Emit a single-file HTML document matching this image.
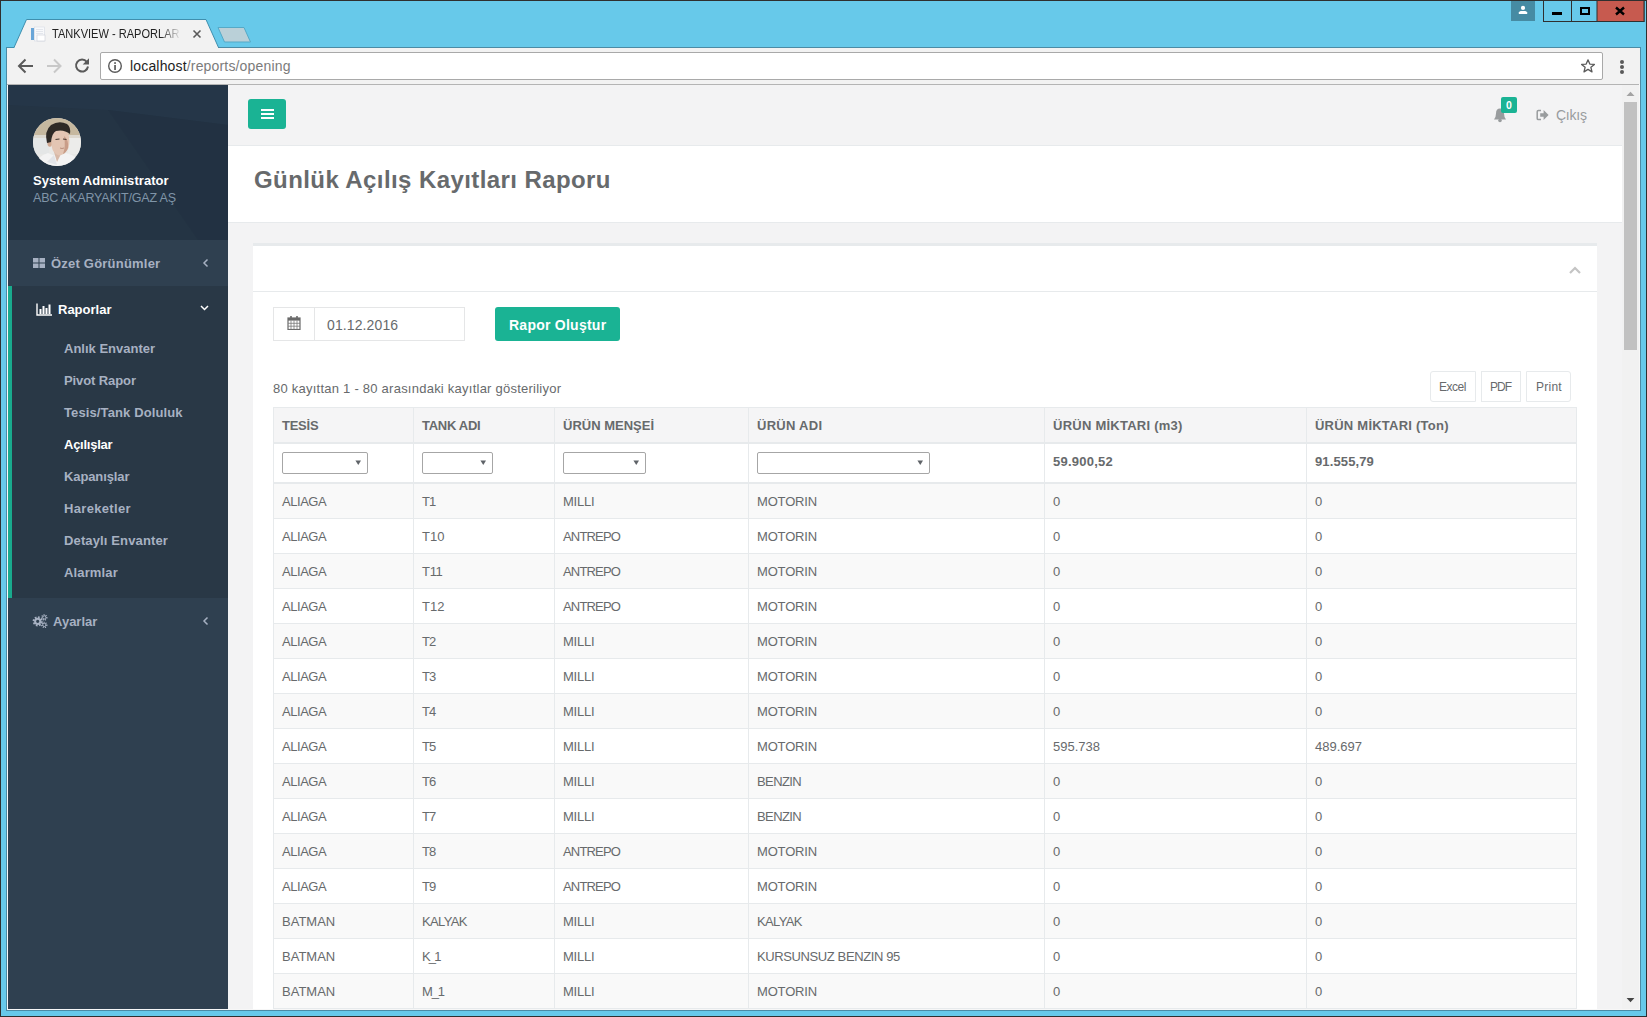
<!DOCTYPE html>
<html><head><meta charset="utf-8"><title>TANKVIEW - RAPORLAR</title>
<style>
html,body{margin:0;padding:0;width:1647px;height:1017px;overflow:hidden;background:#2f2f2f}
body>div,body>svg{position:absolute}
.t{white-space:nowrap;font-family:"Liberation Sans", sans-serif}
</style></head><body>
<div style="left:0px;top:0px;width:1647px;height:1017px;background:#2f2f2f;"></div>
<div style="left:1px;top:1px;width:1645px;height:1015px;background:#67c9ea;"></div>
<svg style="position:absolute;left:0;top:0" width="260" height="48">
<polyline points="6,47.5 14,47.5 26.5,19.5 206,19.5 218.5,47.5" fill="#f2f2f2" stroke="#3f8fae" stroke-width="1"/>
<polygon points="218,27.5 244,27.5 250.5,42 224.5,42" fill="#bad0d8" stroke="#55a9c6" stroke-width="1"/>
<rect x="31" y="28" width="3" height="12" fill="#6aa6d8"/>
<rect x="34.5" y="27" width="10" height="14" fill="#f8f9fb" stroke="#d6dbe3" stroke-width="0.6"/>
<path d="M36,29.5 H43 M36,31.5 H43 M36,33.5 H43" stroke="#dde1e8" stroke-width="0.8"/>
<rect x="37" y="35" width="8" height="6" fill="#ffffff" stroke="#c9ced6" stroke-width="0.6"/>
<path d="M193.5,30.5 L200.5,37.5 M200.5,30.5 L193.5,37.5" stroke="#5a5a5a" stroke-width="1.6"/>
</svg>
<div id="t0" class="t" style="left:52px;top:27.00px;font-size:13px;line-height:13px;color:#222;font-weight:400;transform:scaleX(0.85);transform-origin:0 0;width:152px;overflow:hidden;-webkit-mask-image:linear-gradient(90deg,#000 84%,transparent 100%);">TANKVIEW - RAPORLAR</div>
<div style="left:1511px;top:1px;width:24px;height:20px;background:#468ba3;"></div>
<svg style="position:absolute;left:1511px;top:1px" width="24" height="20">
<circle cx="12" cy="6.9" r="2.1" fill="#fff"/>
<path d="M7.8,13 L7.8,11.6 Q8.4,10.1 9.8,10.1 L14.2,10.1 Q15.6,10.1 16.2,11.6 L16.2,13 Z" fill="#fff"/>
</svg>
<svg style="position:absolute;left:1543px;top:0" width="102" height="23">
<rect x="0.5" y="0.5" width="100.5" height="21" fill="#67c9ea" stroke="#2f2f2f" stroke-width="1"/>
<rect x="54" y="0.5" width="47" height="21" fill="#c75a4f" stroke="#2f2f2f" stroke-width="1"/>
<line x1="28.5" y1="0" x2="28.5" y2="22" stroke="#2f2f2f" stroke-width="1"/>
<rect x="9" y="12" width="10" height="3" fill="#000"/>
<rect x="38" y="8" width="8" height="6" fill="none" stroke="#000" stroke-width="2"/>
<path d="M73,7.5 L81,14.5 M81,7.5 L73,14.5" stroke="#000" stroke-width="2.4"/>
</svg>
<div style="left:218px;top:47px;width:1423px;height:1px;background:#4b8ba5;"></div>
<div style="left:6px;top:47px;width:1px;height:963px;background:#4b8ba5;"></div>
<div style="left:1640px;top:47px;width:1px;height:963px;background:#4b8ba5;"></div>
<div style="left:6px;top:1010px;width:1635px;height:1px;background:#4b8ba5;"></div>
<div style="left:7px;top:48px;width:1633px;height:961px;background:#f7f7f7;"></div>
<div style="left:7px;top:48px;width:1633px;height:36px;background:#f2f2f2;"></div>
<div style="left:15px;top:47px;width:203px;height:2px;background:#f2f2f2;"></div>
<div style="left:7px;top:84px;width:1632px;height:1px;background:#b4b4b4;"></div>
<svg style="position:absolute;left:7px;top:48px" width="100" height="36">
<path d="M18.5,11.5 L12,18 L18.5,24.5 M12,18 L26,18" fill="none" stroke="#5a5a5a" stroke-width="2"/>
<path d="M40,18 L53.5,18 M47,11.5 L53.5,18 L47,24.5" fill="none" stroke="#c8c8c8" stroke-width="2"/>
<path d="M79.8,13.8 A6,6 0 1 0 81,18.5" fill="none" stroke="#5a5a5a" stroke-width="2"/>
<path d="M82,10.2 L82,16.5 L75.7,16.5 Z" fill="#5a5a5a"/>
</svg>
<div style="left:100px;top:52px;width:1503px;height:28px;background:#fff;border:1px solid #a9a9a9;border-radius:2px;box-sizing:border-box"></div>
<svg style="position:absolute;left:105px;top:56px" width="20" height="20">
<circle cx="10" cy="10" r="6.3" fill="none" stroke="#5a5a5a" stroke-width="1.4"/>
<rect x="9.2" y="6.2" width="1.7" height="1.7" fill="#5a5a5a"/>
<rect x="9.2" y="9" width="1.7" height="5" fill="#5a5a5a"/>
</svg>
<div id="t1" class="t" style="left:130px;top:59.15px;font-size:14px;line-height:14px;color:#1e1e1e;font-weight:400;letter-spacing:0.167px;">localhost<span style="color:#7b7b7b">/reports/opening</span></div>
<svg style="position:absolute;left:1577px;top:56px" width="20" height="20">
<polygon points="11,3.8 12.8,8.1 17.4,8.4 13.9,11.3 15,15.9 11,13.4 7,15.9 8.1,11.3 4.6,8.4 9.2,8.1" fill="none" stroke="#5a5a5a" stroke-width="1.3" stroke-linejoin="round"/>
</svg>
<div style="left:1619.5px;top:59.5px;width:4px;height:4px;background:#5a5a5a;border-radius:50%"></div>
<div style="left:1619.5px;top:64.5px;width:4px;height:4px;background:#5a5a5a;border-radius:50%"></div>
<div style="left:1619.5px;top:69.5px;width:4px;height:4px;background:#5a5a5a;border-radius:50%"></div>
<div style="left:8px;top:85px;width:1614px;height:924px;background:#f3f3f4;"></div>
<div style="left:1622px;top:85px;width:17px;height:924px;background:#f1f1f1;"></div>
<div style="left:1624px;top:102px;width:13px;height:248px;background:#c1c1c1;"></div>
<svg style="position:absolute;left:1622px;top:85px" width="17" height="924">
<polygon points="4.5,11 8.5,6.8 12.5,11" fill="#a3a3a3"/>
<polygon points="4.6,913 8.5,917.2 12.4,913" fill="#454545"/>
</svg>
<div style="left:8px;top:85px;width:220px;height:924px;background:#2f4050;"></div>
<svg style="position:absolute;left:8px;top:85px" width="220" height="155">
<rect width="220" height="155" fill="#243444"/>
<polygon points="0,0 220,0 220,40 100,25 0,20" fill="#27384a" opacity="0.7"/>
<polygon points="100,25 220,40 220,155 190,155" fill="#223141" opacity="0.6"/>
</svg>
<div style="left:8px;top:286px;width:220px;height:312px;background:#293846;"></div>
<div style="left:8px;top:286px;width:4px;height:312px;background:#19aa8d;"></div>
<svg style="position:absolute;left:33px;top:118px" width="48" height="48">
<defs><clipPath id="cc"><circle cx="24" cy="24" r="24"/></clipPath>
<filter id="bl"><feGaussianBlur stdDeviation="0.7"/></filter></defs>
<g clip-path="url(#cc)">
<rect width="48" height="48" fill="#e8e8e6"/>
<g filter="url(#bl)">
<rect y="-2" width="50" height="19" fill="#c6b89f"/>
<rect y="17" width="50" height="3" fill="#ddd8cf"/>
<rect x="0" y="20" width="16" height="16" fill="#e4e6e6"/>
<rect x="35" y="20" width="14" height="16" fill="#ececea"/>
<path d="M0,50 Q4,38 15,35 Q24,40 33,35 Q44,38 50,46 L50,50 Z" fill="#f3f3f3"/>
<path d="M14,44 Q18,40 21,37 L24,47 Z" fill="#e2e4e8"/>
<path d="M21,34 L24,44 L29,34 Z" fill="#d7b9a8"/>
<ellipse cx="16.8" cy="25" rx="2.4" ry="3.8" fill="#d0a891"/>
<path d="M18,14 Q27,10 35,15 Q37.5,23 35.5,30 Q32,37 26,37.5 Q20,36 18.5,28 Z" fill="#e3c5b3"/>
<path d="M31,18 Q36,22 35,30 Q33,35 30,36 Q33,28 31,18 Z" fill="#c99d88"/>
<path d="M14,25 Q11,13 18,7 Q26,2 34,6 Q38,9 37,16 Q31,11 23,13 Q19,15 18,24 Z" fill="#2f2a28"/>
<path d="M22.5,21.5 L26.5,21 M30,21 L33.5,21.5" stroke="#4a3a32" stroke-width="1.1"/>
<path d="M27,30 Q29,31 31,30" stroke="#b48876" stroke-width="0.9" fill="none"/>
</g>
</g></svg>
<div id="t2" class="t" style="left:33px;top:174.00px;font-size:13px;line-height:13px;color:#ffffff;font-weight:700;letter-spacing:0.053px;">System Administrator</div>
<div id="t3" class="t" style="left:33px;top:192.42px;font-size:12.5px;line-height:12.5px;color:#8095a8;font-weight:400;letter-spacing:-0.158px;">ABC AKARYAKIT/GAZ AŞ</div>
<svg style="position:absolute;left:32px;top:258px" width="14" height="11">
<rect x="1" y="0" width="5.5" height="4.5" fill="#a7b1c2"/><rect x="7.5" y="0" width="5.5" height="4.5" fill="#a7b1c2"/>
<rect x="1" y="5.5" width="5.5" height="4.5" fill="#a7b1c2"/><rect x="7.5" y="5.5" width="5.5" height="4.5" fill="#a7b1c2"/>
</svg>
<div id="t4" class="t" style="left:51px;top:257.00px;font-size:13px;line-height:13px;color:#a7b1c2;font-weight:700;letter-spacing:0.214px;">Özet Görünümler</div>
<svg style="position:absolute;left:200px;top:256px" width="12" height="14">
<path d="M7.5,3.5 L4,7 L7.5,10.5" fill="none" stroke="#a7b1c2" stroke-width="1.5"/></svg>
<svg style="position:absolute;left:36px;top:303px" width="17" height="13">
<path d="M1,0.5 L1,12 L16,12" fill="none" stroke="#fff" stroke-width="1.4"/>
<rect x="3.5" y="6" width="2" height="5" fill="#fff"/><rect x="6.5" y="3" width="2" height="8" fill="#fff"/>
<rect x="9.5" y="5" width="2" height="6" fill="#fff"/><rect x="12.5" y="1.5" width="2" height="9.5" fill="#fff"/>
</svg>
<div id="t5" class="t" style="left:58px;top:303.00px;font-size:13px;line-height:13px;color:#ffffff;font-weight:700;">Raporlar</div>
<svg style="position:absolute;left:198px;top:302px" width="14" height="12">
<path d="M3,4 L6.5,7.5 L10,4" fill="none" stroke="#fff" stroke-width="1.5"/></svg>
<div id="t6" class="t" style="left:64px;top:342.00px;font-size:13px;line-height:13px;color:#a7b1c2;font-weight:700;">Anlık Envanter</div>
<div id="t7" class="t" style="left:64px;top:374.00px;font-size:13px;line-height:13px;color:#a7b1c2;font-weight:700;letter-spacing:-0.100px;">Pivot Rapor</div>
<div id="t8" class="t" style="left:64px;top:406.00px;font-size:13px;line-height:13px;color:#a7b1c2;font-weight:700;letter-spacing:0.118px;">Tesis/Tank Doluluk</div>
<div id="t9" class="t" style="left:64px;top:438.00px;font-size:13px;line-height:13px;color:#ffffff;font-weight:700;letter-spacing:-0.250px;">Açılışlar</div>
<div id="t10" class="t" style="left:64px;top:470.00px;font-size:13px;line-height:13px;color:#a7b1c2;font-weight:700;letter-spacing:-0.111px;">Kapanışlar</div>
<div id="t11" class="t" style="left:64px;top:502.00px;font-size:13px;line-height:13px;color:#a7b1c2;font-weight:700;letter-spacing:0.333px;">Hareketler</div>
<div id="t12" class="t" style="left:64px;top:534.00px;font-size:13px;line-height:13px;color:#a7b1c2;font-weight:700;letter-spacing:0.133px;">Detaylı Envanter</div>
<div id="t13" class="t" style="left:64px;top:566.00px;font-size:13px;line-height:13px;color:#a7b1c2;font-weight:700;letter-spacing:0.143px;">Alarmlar</div>
<svg style="position:absolute;left:32px;top:614px" width="16" height="14">
<circle cx="5.7" cy="7.3" r="4" fill="none" stroke="#a7b1c2" stroke-width="2.2" stroke-dasharray="1.7 1.4"/>
<circle cx="5.7" cy="7.3" r="2.6" fill="none" stroke="#a7b1c2" stroke-width="2"/>
<circle cx="12.3" cy="3.4" r="2.4" fill="none" stroke="#a7b1c2" stroke-width="1.6" stroke-dasharray="1 0.9"/>
<circle cx="12.3" cy="3.4" r="1.6" fill="none" stroke="#a7b1c2" stroke-width="1"/>
<circle cx="12.3" cy="10.9" r="2.4" fill="none" stroke="#a7b1c2" stroke-width="1.6" stroke-dasharray="1 0.9"/>
<circle cx="12.3" cy="10.9" r="1.6" fill="none" stroke="#a7b1c2" stroke-width="1"/>
</svg>
<div id="t14" class="t" style="left:53px;top:615.00px;font-size:13px;line-height:13px;color:#a7b1c2;font-weight:700;">Ayarlar</div>
<svg style="position:absolute;left:200px;top:614px" width="12" height="14">
<path d="M7.5,3.5 L4,7 L7.5,10.5" fill="none" stroke="#a7b1c2" stroke-width="1.5"/></svg>
<div style="left:228px;top:145px;width:1394px;height:1px;background:#e7eaec;"></div>
<div style="left:248px;top:99px;width:38px;height:30px;background:#1ab394;border-radius:3px"></div>
<div style="left:261px;top:109px;width:13px;height:2px;background:#fff;"></div>
<div style="left:261px;top:113px;width:13px;height:2px;background:#fff;"></div>
<div style="left:261px;top:117px;width:13px;height:2px;background:#fff;"></div>
<svg style="position:absolute;left:1492px;top:106px" width="16" height="17">
<path d="M2,13.5 Q4,11 4,7.5 Q4,2.5 8,2.5 Q12,2.5 12,7.5 Q12,11 14,13.5 Z" fill="#999c9e"/>
<circle cx="8" cy="14.5" r="1.8" fill="#999c9e"/>
</svg>
<div style="left:1501px;top:97px;width:16px;height:16px;background:#1ab394;border-radius:2px"></div>
<div id="t15" class="t" style="left:1506px;top:100.41px;font-size:10.5px;line-height:10.5px;color:#fff;font-weight:700;">0</div>
<svg style="position:absolute;left:1535px;top:108px" width="16" height="13">
<path d="M6,2.6 L3.4,2.6 Q2.2,2.6 2.2,3.8 L2.2,10.4 Q2.2,11.6 3.4,11.6 L6,11.6" fill="none" stroke="#999c9e" stroke-width="1.5"/>
<path d="M5.2,5.3 L8.6,5.3 L8.6,2 L13.6,7 L8.6,12 L8.6,8.7 L5.2,8.7 Z" fill="#999c9e"/>
</svg>
<div id="t16" class="t" style="left:1556px;top:108.15px;font-size:14px;line-height:14px;color:#999c9e;font-weight:400;letter-spacing:-0.250px;">Çıkış</div>
<div style="left:228px;top:146px;width:1394px;height:76px;background:#ffffff;"></div>
<div style="left:228px;top:222px;width:1394px;height:1px;background:#e7eaec;"></div>
<div id="t17" class="t" style="left:254px;top:167.68px;font-size:24px;line-height:24px;color:#676a6c;font-weight:700;letter-spacing:0.414px;">Günlük Açılış Kayıtları Raporu</div>
<div style="left:253px;top:243px;width:1344px;height:3px;background:#e7eaec;"></div>
<div style="left:253px;top:246px;width:1344px;height:763px;background:#ffffff;"></div>
<div style="left:253px;top:291px;width:1344px;height:1px;background:#e7eaec;"></div>
<svg style="position:absolute;left:1567px;top:263px" width="16" height="14">
<path d="M3,10 L8,5 L13,10" fill="none" stroke="#c4c4c4" stroke-width="2.2"/></svg>
<div style="left:273px;top:307px;width:192px;height:34px;border:1px solid #e5e6e7;box-sizing:border-box;background:#fff"></div>
<div style="left:314px;top:307px;width:1px;height:34px;background:#e5e6e7;"></div>
<svg style="position:absolute;left:287px;top:316px" width="14" height="14">
<rect x="1" y="2" width="12" height="11.5" fill="#fff" stroke="#6a6a6a" stroke-width="1.2"/>
<rect x="1" y="2" width="12" height="2.6" fill="#6a6a6a"/>
<rect x="3.2" y="0" width="1.6" height="3" fill="#6a6a6a"/><rect x="9.2" y="0" width="1.6" height="3" fill="#6a6a6a"/>
<g stroke="#7a7a7a" stroke-width="0.8">
<line x1="1" y1="7.3" x2="13" y2="7.3"/><line x1="1" y1="10.2" x2="13" y2="10.2"/>
<line x1="4" y1="4.5" x2="4" y2="13.5"/><line x1="7" y1="4.5" x2="7" y2="13.5"/><line x1="10" y1="4.5" x2="10" y2="13.5"/>
</g></svg>
<div id="t18" class="t" style="left:327px;top:318.15px;font-size:14px;line-height:14px;color:#676a6c;font-weight:400;letter-spacing:0.111px;">01.12.2016</div>
<div style="left:495px;top:307px;width:125px;height:34px;background:#1ab394;border-radius:3px"></div>
<div id="t19" class="t" style="left:509px;top:318.15px;font-size:14px;line-height:14px;color:#ffffff;font-weight:700;letter-spacing:0.250px;">Rapor Oluştur</div>
<div id="t20" class="t" style="left:273px;top:382.00px;font-size:13px;line-height:13px;color:#676a6c;font-weight:400;letter-spacing:0.240px;">80 kayıttan 1 - 80 arasındaki kayıtlar gösteriliyor</div>
<div style="left:1430px;top:371px;width:46px;height:31px;border:1px solid #e7eaec;box-sizing:border-box;border-radius:3px 0 0 3px;background:#fff"></div>
<div id="t21" class="t" style="left:1439px;top:380.84px;font-size:12px;line-height:12px;color:#676a6c;font-weight:400;letter-spacing:-0.500px;">Excel</div>
<div style="left:1481px;top:371px;width:40px;height:31px;border:1px solid #e7eaec;box-sizing:border-box;border-radius:0;background:#fff"></div>
<div id="t22" class="t" style="left:1490px;top:380.84px;font-size:12px;line-height:12px;color:#676a6c;font-weight:400;letter-spacing:-1.000px;">PDF</div>
<div style="left:1526px;top:371px;width:45px;height:31px;border:1px solid #e7eaec;box-sizing:border-box;border-radius:0 3px 3px 0;background:#fff"></div>
<div id="t23" class="t" style="left:1536px;top:380.84px;font-size:12px;line-height:12px;color:#676a6c;font-weight:400;letter-spacing:0.250px;">Print</div>
<div style="left:273px;top:407px;width:1303px;height:36px;background:#f5f5f6;"></div>
<div style="left:273px;top:407px;width:1304px;height:1px;background:#e7eaec;"></div>
<div style="left:273px;top:442px;width:1304px;height:2px;background:#e7eaec;"></div>
<div style="left:273px;top:444px;width:1303px;height:38px;background:#ffffff;"></div>
<div style="left:273px;top:482px;width:1304px;height:2px;background:#e7eaec;"></div>
<div id="t24" class="t" style="left:282px;top:419.00px;font-size:13px;line-height:13px;color:#676a6c;font-weight:700;letter-spacing:-0.250px;">TESİS</div>
<div id="t25" class="t" style="left:422px;top:419.00px;font-size:13px;line-height:13px;color:#676a6c;font-weight:700;letter-spacing:-0.286px;">TANK ADI</div>
<div id="t26" class="t" style="left:563px;top:419.00px;font-size:13px;line-height:13px;color:#676a6c;font-weight:700;">ÜRÜN MENŞEİ</div>
<div id="t27" class="t" style="left:757px;top:419.00px;font-size:13px;line-height:13px;color:#676a6c;font-weight:700;letter-spacing:0.286px;">ÜRÜN ADI</div>
<div id="t28" class="t" style="left:1053px;top:419.00px;font-size:13px;line-height:13px;color:#676a6c;font-weight:700;letter-spacing:0.250px;">ÜRÜN MİKTARI (m3)</div>
<div id="t29" class="t" style="left:1315px;top:419.00px;font-size:13px;line-height:13px;color:#676a6c;font-weight:700;letter-spacing:0.235px;">ÜRÜN MİKTARI (Ton)</div>
<div style="left:282px;top:452px;width:86px;height:22px;border:1px solid #a6a6a6;border-radius:2px;box-sizing:border-box;background:#fff"></div>
<svg style="position:absolute;left:354px;top:458px" width="10" height="8"><polygon points="1.4,2.4 7,2.4 4.3,7" fill="#5f6368"/></svg>
<div style="left:422px;top:452px;width:71px;height:22px;border:1px solid #a6a6a6;border-radius:2px;box-sizing:border-box;background:#fff"></div>
<svg style="position:absolute;left:479px;top:458px" width="10" height="8"><polygon points="1.4,2.4 7,2.4 4.3,7" fill="#5f6368"/></svg>
<div style="left:563px;top:452px;width:83px;height:22px;border:1px solid #a6a6a6;border-radius:2px;box-sizing:border-box;background:#fff"></div>
<svg style="position:absolute;left:632px;top:458px" width="10" height="8"><polygon points="1.4,2.4 7,2.4 4.3,7" fill="#5f6368"/></svg>
<div style="left:757px;top:452px;width:173px;height:22px;border:1px solid #a6a6a6;border-radius:2px;box-sizing:border-box;background:#fff"></div>
<svg style="position:absolute;left:916px;top:458px" width="10" height="8"><polygon points="1.4,2.4 7,2.4 4.3,7" fill="#5f6368"/></svg>
<div id="t30" class="t" style="left:1053px;top:455.00px;font-size:13px;line-height:13px;color:#676a6c;font-weight:700;letter-spacing:0.250px;">59.900,52</div>
<div id="t31" class="t" style="left:1315px;top:455.00px;font-size:13px;line-height:13px;color:#676a6c;font-weight:700;letter-spacing:0.125px;">91.555,79</div>
<div style="left:273px;top:484px;width:1303px;height:34px;background:#f9f9f9;"></div>
<div style="left:273px;top:518px;width:1304px;height:1px;background:#e7eaec;"></div>
<div id="t32" class="t" style="left:282px;top:495.00px;font-size:13px;line-height:13px;color:#676a6c;font-weight:400;letter-spacing:-0.46px;">ALIAGA</div>
<div id="t33" class="t" style="left:422px;top:495.00px;font-size:13px;line-height:13px;color:#676a6c;font-weight:400;letter-spacing:-1px;">T1</div>
<div id="t34" class="t" style="left:563px;top:495.00px;font-size:13px;line-height:13px;color:#676a6c;font-weight:400;letter-spacing:-0.25px;">MILLI</div>
<div id="t35" class="t" style="left:757px;top:495.00px;font-size:13px;line-height:13px;color:#676a6c;font-weight:400;letter-spacing:-0.17px;">MOTORIN</div>
<div id="t36" class="t" style="left:1053px;top:495.00px;font-size:13px;line-height:13px;color:#676a6c;font-weight:400;">0</div>
<div id="t37" class="t" style="left:1315px;top:495.00px;font-size:13px;line-height:13px;color:#676a6c;font-weight:400;">0</div>
<div style="left:273px;top:519px;width:1303px;height:34px;background:#ffffff;"></div>
<div style="left:273px;top:553px;width:1304px;height:1px;background:#e7eaec;"></div>
<div id="t38" class="t" style="left:282px;top:530.00px;font-size:13px;line-height:13px;color:#676a6c;font-weight:400;letter-spacing:-0.46px;">ALIAGA</div>
<div id="t39" class="t" style="left:422px;top:530.00px;font-size:13px;line-height:13px;color:#676a6c;font-weight:400;">T10</div>
<div id="t40" class="t" style="left:563px;top:530.00px;font-size:13px;line-height:13px;color:#676a6c;font-weight:400;letter-spacing:-0.83px;">ANTREPO</div>
<div id="t41" class="t" style="left:757px;top:530.00px;font-size:13px;line-height:13px;color:#676a6c;font-weight:400;letter-spacing:-0.17px;">MOTORIN</div>
<div id="t42" class="t" style="left:1053px;top:530.00px;font-size:13px;line-height:13px;color:#676a6c;font-weight:400;">0</div>
<div id="t43" class="t" style="left:1315px;top:530.00px;font-size:13px;line-height:13px;color:#676a6c;font-weight:400;">0</div>
<div style="left:273px;top:554px;width:1303px;height:34px;background:#f9f9f9;"></div>
<div style="left:273px;top:588px;width:1304px;height:1px;background:#e7eaec;"></div>
<div id="t44" class="t" style="left:282px;top:565.00px;font-size:13px;line-height:13px;color:#676a6c;font-weight:400;letter-spacing:-0.46px;">ALIAGA</div>
<div id="t45" class="t" style="left:422px;top:565.00px;font-size:13px;line-height:13px;color:#676a6c;font-weight:400;letter-spacing:-0.3px;">T11</div>
<div id="t46" class="t" style="left:563px;top:565.00px;font-size:13px;line-height:13px;color:#676a6c;font-weight:400;letter-spacing:-0.83px;">ANTREPO</div>
<div id="t47" class="t" style="left:757px;top:565.00px;font-size:13px;line-height:13px;color:#676a6c;font-weight:400;letter-spacing:-0.17px;">MOTORIN</div>
<div id="t48" class="t" style="left:1053px;top:565.00px;font-size:13px;line-height:13px;color:#676a6c;font-weight:400;">0</div>
<div id="t49" class="t" style="left:1315px;top:565.00px;font-size:13px;line-height:13px;color:#676a6c;font-weight:400;">0</div>
<div style="left:273px;top:589px;width:1303px;height:34px;background:#ffffff;"></div>
<div style="left:273px;top:623px;width:1304px;height:1px;background:#e7eaec;"></div>
<div id="t50" class="t" style="left:282px;top:600.00px;font-size:13px;line-height:13px;color:#676a6c;font-weight:400;letter-spacing:-0.46px;">ALIAGA</div>
<div id="t51" class="t" style="left:422px;top:600.00px;font-size:13px;line-height:13px;color:#676a6c;font-weight:400;">T12</div>
<div id="t52" class="t" style="left:563px;top:600.00px;font-size:13px;line-height:13px;color:#676a6c;font-weight:400;letter-spacing:-0.83px;">ANTREPO</div>
<div id="t53" class="t" style="left:757px;top:600.00px;font-size:13px;line-height:13px;color:#676a6c;font-weight:400;letter-spacing:-0.17px;">MOTORIN</div>
<div id="t54" class="t" style="left:1053px;top:600.00px;font-size:13px;line-height:13px;color:#676a6c;font-weight:400;">0</div>
<div id="t55" class="t" style="left:1315px;top:600.00px;font-size:13px;line-height:13px;color:#676a6c;font-weight:400;">0</div>
<div style="left:273px;top:624px;width:1303px;height:34px;background:#f9f9f9;"></div>
<div style="left:273px;top:658px;width:1304px;height:1px;background:#e7eaec;"></div>
<div id="t56" class="t" style="left:282px;top:635.00px;font-size:13px;line-height:13px;color:#676a6c;font-weight:400;letter-spacing:-0.46px;">ALIAGA</div>
<div id="t57" class="t" style="left:422px;top:635.00px;font-size:13px;line-height:13px;color:#676a6c;font-weight:400;letter-spacing:-1px;">T2</div>
<div id="t58" class="t" style="left:563px;top:635.00px;font-size:13px;line-height:13px;color:#676a6c;font-weight:400;letter-spacing:-0.25px;">MILLI</div>
<div id="t59" class="t" style="left:757px;top:635.00px;font-size:13px;line-height:13px;color:#676a6c;font-weight:400;letter-spacing:-0.17px;">MOTORIN</div>
<div id="t60" class="t" style="left:1053px;top:635.00px;font-size:13px;line-height:13px;color:#676a6c;font-weight:400;">0</div>
<div id="t61" class="t" style="left:1315px;top:635.00px;font-size:13px;line-height:13px;color:#676a6c;font-weight:400;">0</div>
<div style="left:273px;top:659px;width:1303px;height:34px;background:#ffffff;"></div>
<div style="left:273px;top:693px;width:1304px;height:1px;background:#e7eaec;"></div>
<div id="t62" class="t" style="left:282px;top:670.00px;font-size:13px;line-height:13px;color:#676a6c;font-weight:400;letter-spacing:-0.46px;">ALIAGA</div>
<div id="t63" class="t" style="left:422px;top:670.00px;font-size:13px;line-height:13px;color:#676a6c;font-weight:400;letter-spacing:-1px;">T3</div>
<div id="t64" class="t" style="left:563px;top:670.00px;font-size:13px;line-height:13px;color:#676a6c;font-weight:400;letter-spacing:-0.25px;">MILLI</div>
<div id="t65" class="t" style="left:757px;top:670.00px;font-size:13px;line-height:13px;color:#676a6c;font-weight:400;letter-spacing:-0.17px;">MOTORIN</div>
<div id="t66" class="t" style="left:1053px;top:670.00px;font-size:13px;line-height:13px;color:#676a6c;font-weight:400;">0</div>
<div id="t67" class="t" style="left:1315px;top:670.00px;font-size:13px;line-height:13px;color:#676a6c;font-weight:400;">0</div>
<div style="left:273px;top:694px;width:1303px;height:34px;background:#f9f9f9;"></div>
<div style="left:273px;top:728px;width:1304px;height:1px;background:#e7eaec;"></div>
<div id="t68" class="t" style="left:282px;top:705.00px;font-size:13px;line-height:13px;color:#676a6c;font-weight:400;letter-spacing:-0.46px;">ALIAGA</div>
<div id="t69" class="t" style="left:422px;top:705.00px;font-size:13px;line-height:13px;color:#676a6c;font-weight:400;letter-spacing:-1px;">T4</div>
<div id="t70" class="t" style="left:563px;top:705.00px;font-size:13px;line-height:13px;color:#676a6c;font-weight:400;letter-spacing:-0.25px;">MILLI</div>
<div id="t71" class="t" style="left:757px;top:705.00px;font-size:13px;line-height:13px;color:#676a6c;font-weight:400;letter-spacing:-0.17px;">MOTORIN</div>
<div id="t72" class="t" style="left:1053px;top:705.00px;font-size:13px;line-height:13px;color:#676a6c;font-weight:400;">0</div>
<div id="t73" class="t" style="left:1315px;top:705.00px;font-size:13px;line-height:13px;color:#676a6c;font-weight:400;">0</div>
<div style="left:273px;top:729px;width:1303px;height:34px;background:#ffffff;"></div>
<div style="left:273px;top:763px;width:1304px;height:1px;background:#e7eaec;"></div>
<div id="t74" class="t" style="left:282px;top:740.00px;font-size:13px;line-height:13px;color:#676a6c;font-weight:400;letter-spacing:-0.46px;">ALIAGA</div>
<div id="t75" class="t" style="left:422px;top:740.00px;font-size:13px;line-height:13px;color:#676a6c;font-weight:400;letter-spacing:-1px;">T5</div>
<div id="t76" class="t" style="left:563px;top:740.00px;font-size:13px;line-height:13px;color:#676a6c;font-weight:400;letter-spacing:-0.25px;">MILLI</div>
<div id="t77" class="t" style="left:757px;top:740.00px;font-size:13px;line-height:13px;color:#676a6c;font-weight:400;letter-spacing:-0.17px;">MOTORIN</div>
<div id="t78" class="t" style="left:1053px;top:740.00px;font-size:13px;line-height:13px;color:#676a6c;font-weight:400;">595.738</div>
<div id="t79" class="t" style="left:1315px;top:740.00px;font-size:13px;line-height:13px;color:#676a6c;font-weight:400;">489.697</div>
<div style="left:273px;top:764px;width:1303px;height:34px;background:#f9f9f9;"></div>
<div style="left:273px;top:798px;width:1304px;height:1px;background:#e7eaec;"></div>
<div id="t80" class="t" style="left:282px;top:775.00px;font-size:13px;line-height:13px;color:#676a6c;font-weight:400;letter-spacing:-0.46px;">ALIAGA</div>
<div id="t81" class="t" style="left:422px;top:775.00px;font-size:13px;line-height:13px;color:#676a6c;font-weight:400;letter-spacing:-1px;">T6</div>
<div id="t82" class="t" style="left:563px;top:775.00px;font-size:13px;line-height:13px;color:#676a6c;font-weight:400;letter-spacing:-0.25px;">MILLI</div>
<div id="t83" class="t" style="left:757px;top:775.00px;font-size:13px;line-height:13px;color:#676a6c;font-weight:400;letter-spacing:-0.6px;">BENZIN</div>
<div id="t84" class="t" style="left:1053px;top:775.00px;font-size:13px;line-height:13px;color:#676a6c;font-weight:400;">0</div>
<div id="t85" class="t" style="left:1315px;top:775.00px;font-size:13px;line-height:13px;color:#676a6c;font-weight:400;">0</div>
<div style="left:273px;top:799px;width:1303px;height:34px;background:#ffffff;"></div>
<div style="left:273px;top:833px;width:1304px;height:1px;background:#e7eaec;"></div>
<div id="t86" class="t" style="left:282px;top:810.00px;font-size:13px;line-height:13px;color:#676a6c;font-weight:400;letter-spacing:-0.46px;">ALIAGA</div>
<div id="t87" class="t" style="left:422px;top:810.00px;font-size:13px;line-height:13px;color:#676a6c;font-weight:400;letter-spacing:-1px;">T7</div>
<div id="t88" class="t" style="left:563px;top:810.00px;font-size:13px;line-height:13px;color:#676a6c;font-weight:400;letter-spacing:-0.25px;">MILLI</div>
<div id="t89" class="t" style="left:757px;top:810.00px;font-size:13px;line-height:13px;color:#676a6c;font-weight:400;letter-spacing:-0.6px;">BENZIN</div>
<div id="t90" class="t" style="left:1053px;top:810.00px;font-size:13px;line-height:13px;color:#676a6c;font-weight:400;">0</div>
<div id="t91" class="t" style="left:1315px;top:810.00px;font-size:13px;line-height:13px;color:#676a6c;font-weight:400;">0</div>
<div style="left:273px;top:834px;width:1303px;height:34px;background:#f9f9f9;"></div>
<div style="left:273px;top:868px;width:1304px;height:1px;background:#e7eaec;"></div>
<div id="t92" class="t" style="left:282px;top:845.00px;font-size:13px;line-height:13px;color:#676a6c;font-weight:400;letter-spacing:-0.46px;">ALIAGA</div>
<div id="t93" class="t" style="left:422px;top:845.00px;font-size:13px;line-height:13px;color:#676a6c;font-weight:400;letter-spacing:-1px;">T8</div>
<div id="t94" class="t" style="left:563px;top:845.00px;font-size:13px;line-height:13px;color:#676a6c;font-weight:400;letter-spacing:-0.83px;">ANTREPO</div>
<div id="t95" class="t" style="left:757px;top:845.00px;font-size:13px;line-height:13px;color:#676a6c;font-weight:400;letter-spacing:-0.17px;">MOTORIN</div>
<div id="t96" class="t" style="left:1053px;top:845.00px;font-size:13px;line-height:13px;color:#676a6c;font-weight:400;">0</div>
<div id="t97" class="t" style="left:1315px;top:845.00px;font-size:13px;line-height:13px;color:#676a6c;font-weight:400;">0</div>
<div style="left:273px;top:869px;width:1303px;height:34px;background:#ffffff;"></div>
<div style="left:273px;top:903px;width:1304px;height:1px;background:#e7eaec;"></div>
<div id="t98" class="t" style="left:282px;top:880.00px;font-size:13px;line-height:13px;color:#676a6c;font-weight:400;letter-spacing:-0.46px;">ALIAGA</div>
<div id="t99" class="t" style="left:422px;top:880.00px;font-size:13px;line-height:13px;color:#676a6c;font-weight:400;letter-spacing:-1px;">T9</div>
<div id="t100" class="t" style="left:563px;top:880.00px;font-size:13px;line-height:13px;color:#676a6c;font-weight:400;letter-spacing:-0.83px;">ANTREPO</div>
<div id="t101" class="t" style="left:757px;top:880.00px;font-size:13px;line-height:13px;color:#676a6c;font-weight:400;letter-spacing:-0.17px;">MOTORIN</div>
<div id="t102" class="t" style="left:1053px;top:880.00px;font-size:13px;line-height:13px;color:#676a6c;font-weight:400;">0</div>
<div id="t103" class="t" style="left:1315px;top:880.00px;font-size:13px;line-height:13px;color:#676a6c;font-weight:400;">0</div>
<div style="left:273px;top:904px;width:1303px;height:34px;background:#f9f9f9;"></div>
<div style="left:273px;top:938px;width:1304px;height:1px;background:#e7eaec;"></div>
<div id="t104" class="t" style="left:282px;top:915.00px;font-size:13px;line-height:13px;color:#676a6c;font-weight:400;">BATMAN</div>
<div id="t105" class="t" style="left:422px;top:915.00px;font-size:13px;line-height:13px;color:#676a6c;font-weight:400;letter-spacing:-0.66px;">KALYAK</div>
<div id="t106" class="t" style="left:563px;top:915.00px;font-size:13px;line-height:13px;color:#676a6c;font-weight:400;letter-spacing:-0.25px;">MILLI</div>
<div id="t107" class="t" style="left:757px;top:915.00px;font-size:13px;line-height:13px;color:#676a6c;font-weight:400;letter-spacing:-0.66px;">KALYAK</div>
<div id="t108" class="t" style="left:1053px;top:915.00px;font-size:13px;line-height:13px;color:#676a6c;font-weight:400;">0</div>
<div id="t109" class="t" style="left:1315px;top:915.00px;font-size:13px;line-height:13px;color:#676a6c;font-weight:400;">0</div>
<div style="left:273px;top:939px;width:1303px;height:34px;background:#ffffff;"></div>
<div style="left:273px;top:973px;width:1304px;height:1px;background:#e7eaec;"></div>
<div id="t110" class="t" style="left:282px;top:950.00px;font-size:13px;line-height:13px;color:#676a6c;font-weight:400;">BATMAN</div>
<div id="t111" class="t" style="left:422px;top:950.00px;font-size:13px;line-height:13px;color:#676a6c;font-weight:400;letter-spacing:-1.8px;">K_1</div>
<div id="t112" class="t" style="left:563px;top:950.00px;font-size:13px;line-height:13px;color:#676a6c;font-weight:400;letter-spacing:-0.25px;">MILLI</div>
<div id="t113" class="t" style="left:757px;top:950.00px;font-size:13px;line-height:13px;color:#676a6c;font-weight:400;letter-spacing:-0.39px;">KURSUNSUZ BENZIN 95</div>
<div id="t114" class="t" style="left:1053px;top:950.00px;font-size:13px;line-height:13px;color:#676a6c;font-weight:400;">0</div>
<div id="t115" class="t" style="left:1315px;top:950.00px;font-size:13px;line-height:13px;color:#676a6c;font-weight:400;">0</div>
<div style="left:273px;top:974px;width:1303px;height:34px;background:#f9f9f9;"></div>
<div style="left:273px;top:1008px;width:1304px;height:1px;background:#e7eaec;"></div>
<div id="t116" class="t" style="left:282px;top:985.00px;font-size:13px;line-height:13px;color:#676a6c;font-weight:400;">BATMAN</div>
<div id="t117" class="t" style="left:422px;top:985.00px;font-size:13px;line-height:13px;color:#676a6c;font-weight:400;letter-spacing:-1.1px;">M_1</div>
<div id="t118" class="t" style="left:563px;top:985.00px;font-size:13px;line-height:13px;color:#676a6c;font-weight:400;letter-spacing:-0.25px;">MILLI</div>
<div id="t119" class="t" style="left:757px;top:985.00px;font-size:13px;line-height:13px;color:#676a6c;font-weight:400;letter-spacing:-0.17px;">MOTORIN</div>
<div id="t120" class="t" style="left:1053px;top:985.00px;font-size:13px;line-height:13px;color:#676a6c;font-weight:400;">0</div>
<div id="t121" class="t" style="left:1315px;top:985.00px;font-size:13px;line-height:13px;color:#676a6c;font-weight:400;">0</div>
<div style="left:273px;top:407px;width:1px;height:602px;background:#e7eaec;"></div>
<div style="left:413px;top:407px;width:1px;height:602px;background:#e7eaec;"></div>
<div style="left:554px;top:407px;width:1px;height:602px;background:#e7eaec;"></div>
<div style="left:748px;top:407px;width:1px;height:602px;background:#e7eaec;"></div>
<div style="left:1044px;top:407px;width:1px;height:602px;background:#e7eaec;"></div>
<div style="left:1306px;top:407px;width:1px;height:602px;background:#e7eaec;"></div>
<div style="left:1576px;top:407px;width:1px;height:602px;background:#e7eaec;"></div>
<div style="left:7px;top:1009px;width:1633px;height:1px;background:#f7f7f7;"></div>
</body></html>
